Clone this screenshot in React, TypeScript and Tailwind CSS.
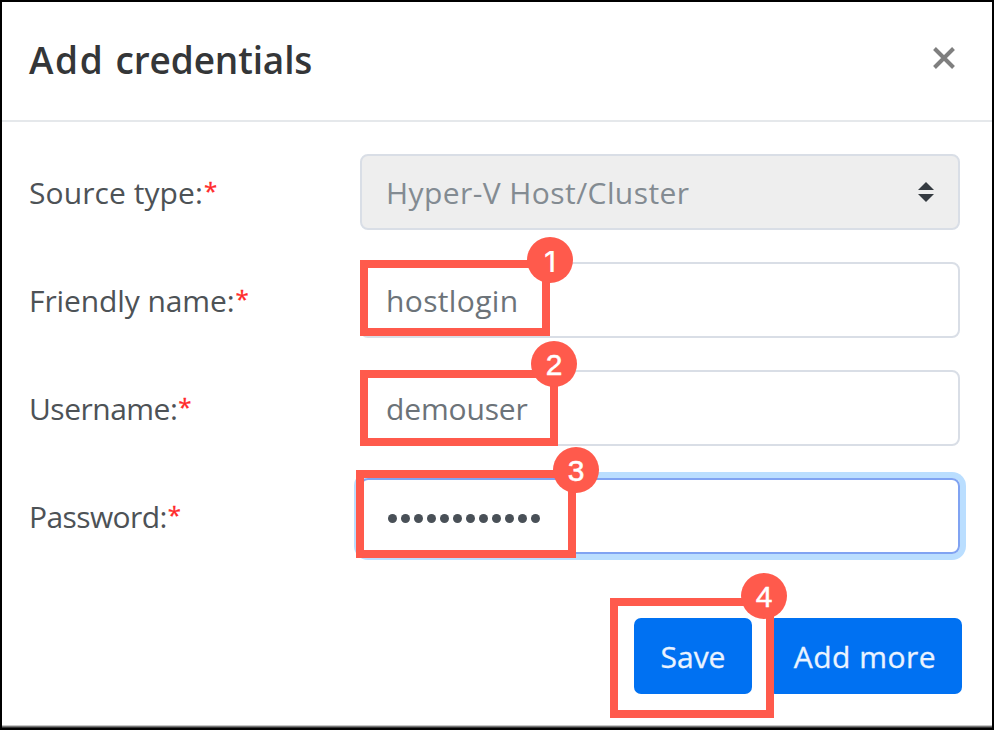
import type { ReactNode } from "react";

function Marker({ n, box, badge }: { n: number; box: string; badge: string }) {
  const face =
    n === 1
      ? "font-['Inter',sans-serif] font-medium text-[29px]"
      : "font-['Liberation_Sans',sans-serif] text-[30px] [-webkit-text-stroke:0.5px_white]";
  return (
    <>
      <div className={`absolute z-10 border-8 border-[#ff5a4c] ${box}`} />
      <div
        className={`absolute z-20 flex size-[46px] items-center justify-center rounded-full bg-[#ff5a4c] pt-[2px] leading-none text-white ${face} ${badge}`}
      >
        {n}
      </div>
    </>
  );
}

function Row({ label, tracking, children }: { label: string; tracking: string; children: ReactNode }) {
  return (
    <div className="flex h-[76px] items-center">
      <label className="flex w-[331px] shrink-0 items-center whitespace-pre pt-[2px] text-[30px] leading-[40px] text-[#4d5256]">
        <span className={tracking}>{label}</span>
        <span className="pb-[5px] pl-px text-[24px] leading-[36px] text-[#ff2a2a] [-webkit-text-stroke:0.3px_#ff2a2a]">*</span>
      </label>
      <div className="relative h-[76px] w-[600px]">{children}</div>
    </div>
  );
}

const field = "flex h-full w-full items-center rounded-[8px] border-2 pl-6 text-[30px] leading-[40px]";

export default function App() {
  return (
    <div className="flex h-[730px] w-[994px] flex-col overflow-hidden border-2 border-black bg-black font-['Open_Sans','Noto_Sans',sans-serif]">
      <div className="flex h-[723px] flex-col bg-white">
        <header className="flex h-[120px] shrink-0 items-center justify-between border-b-2 border-[#e5e8eb] pr-[37px] pl-[27px]">
          <h1 className="pb-[2px] text-[37px] leading-[48px] font-semibold text-[#343638]">
            <span className="tracking-[1.6px]">Add </span>
            <span className="tracking-[-0.15px]">credentials</span>
          </h1>
          <svg width="22" height="22" viewBox="0 0 22 22" className="mb-1.5" fill="none" stroke="#7f7f7f" strokeWidth="4">
            <path d="M1.5 1.5 20.5 20.5M20.5 1.5 1.5 20.5" />
          </svg>
        </header>
        <main className="flex flex-col gap-8 pt-8 pl-[27px]">
          <Row label="Source type:" tracking="tracking-[0.08px]">
            <div className={`${field} justify-between border-[#d9dee6] bg-[#eeeeee] pr-6 text-[#838b92]`}>
              <span className="pt-[2px] tracking-[0.42px]">Hyper-V Host/Cluster</span>
              <svg width="16" height="20" viewBox="0 0 16 20" fill="#343a40">
                <path d="M8 0 16 8H0ZM0 12H16L8 20Z" />
              </svg>
            </div>
          </Row>
          <Row label="Friendly name:" tracking="tracking-[-0.1px]">
            <div className={`${field} border-[#d9dee6] text-[#6c7379]`}>
              <span className="pt-[2px] tracking-[0.35px]">hostlogin</span>
            </div>
            <Marker n={1} box="left-0 -top-0.5 h-[76px] w-[190px]" badge="left-[167px] -top-[25px]" />
          </Row>
          <Row label="Username:" tracking="tracking-[-0.5px]">
            <div className={`${field} border-[#d9dee6] text-[#6c7379]`}>
              <span className="pt-[2px] tracking-[-0.15px]">demouser</span>
            </div>
            <Marker n={2} box="left-0 top-0 h-[76px] w-[198px]" badge="left-[171px] -top-[29px]" />
          </Row>
          <Row label="Password:" tracking="tracking-[-0.6px]">
            <div className={`${field} border-[#80a3f2] shadow-[0_0_0_6px_#badeff]`}>
              <div className="flex gap-1 pt-1 pl-[2px]">
                {Array.from({ length: 12 }, (_, i) => (
                  <i key={i} className="size-[9px] rounded-full bg-[#495057]" />
                ))}
              </div>
            </div>
            <Marker n={3} box="-left-1 -top-2 h-[88px] w-[220px]" badge="left-[193px] -top-[31px]" />
          </Row>
        </main>
        <footer className="flex justify-end gap-4 pt-16 pr-[30px] text-[30px] leading-[40px] text-[#eaf3ff] [-webkit-text-stroke:0.3px_#eaf3ff]">
          <div className="relative">
            <button className="h-[76px] w-[118px] rounded-[7px] bg-[#0071f2] pt-[2px]">
              <span className="tracking-[0px]">Save</span>
            </button>
            <Marker n={4} box="-left-6 -top-5 h-[120px] w-[164px]" badge="left-[107px] -top-[45px]" />
          </div>
          <button className="h-[76px] w-[194px] rounded-[7px] bg-[#0071f2] pt-[2px] whitespace-nowrap">
            <span className="tracking-[0.5px]">Add more</span>
          </button>
        </footer>
      </div>
      <div className="h-px shrink-0 bg-[#c8c8c8]" />
      <div className="h-px shrink-0 bg-[#777777]" />
      <div className="h-px shrink-0 bg-[#353535]" />
    </div>
  );
}
